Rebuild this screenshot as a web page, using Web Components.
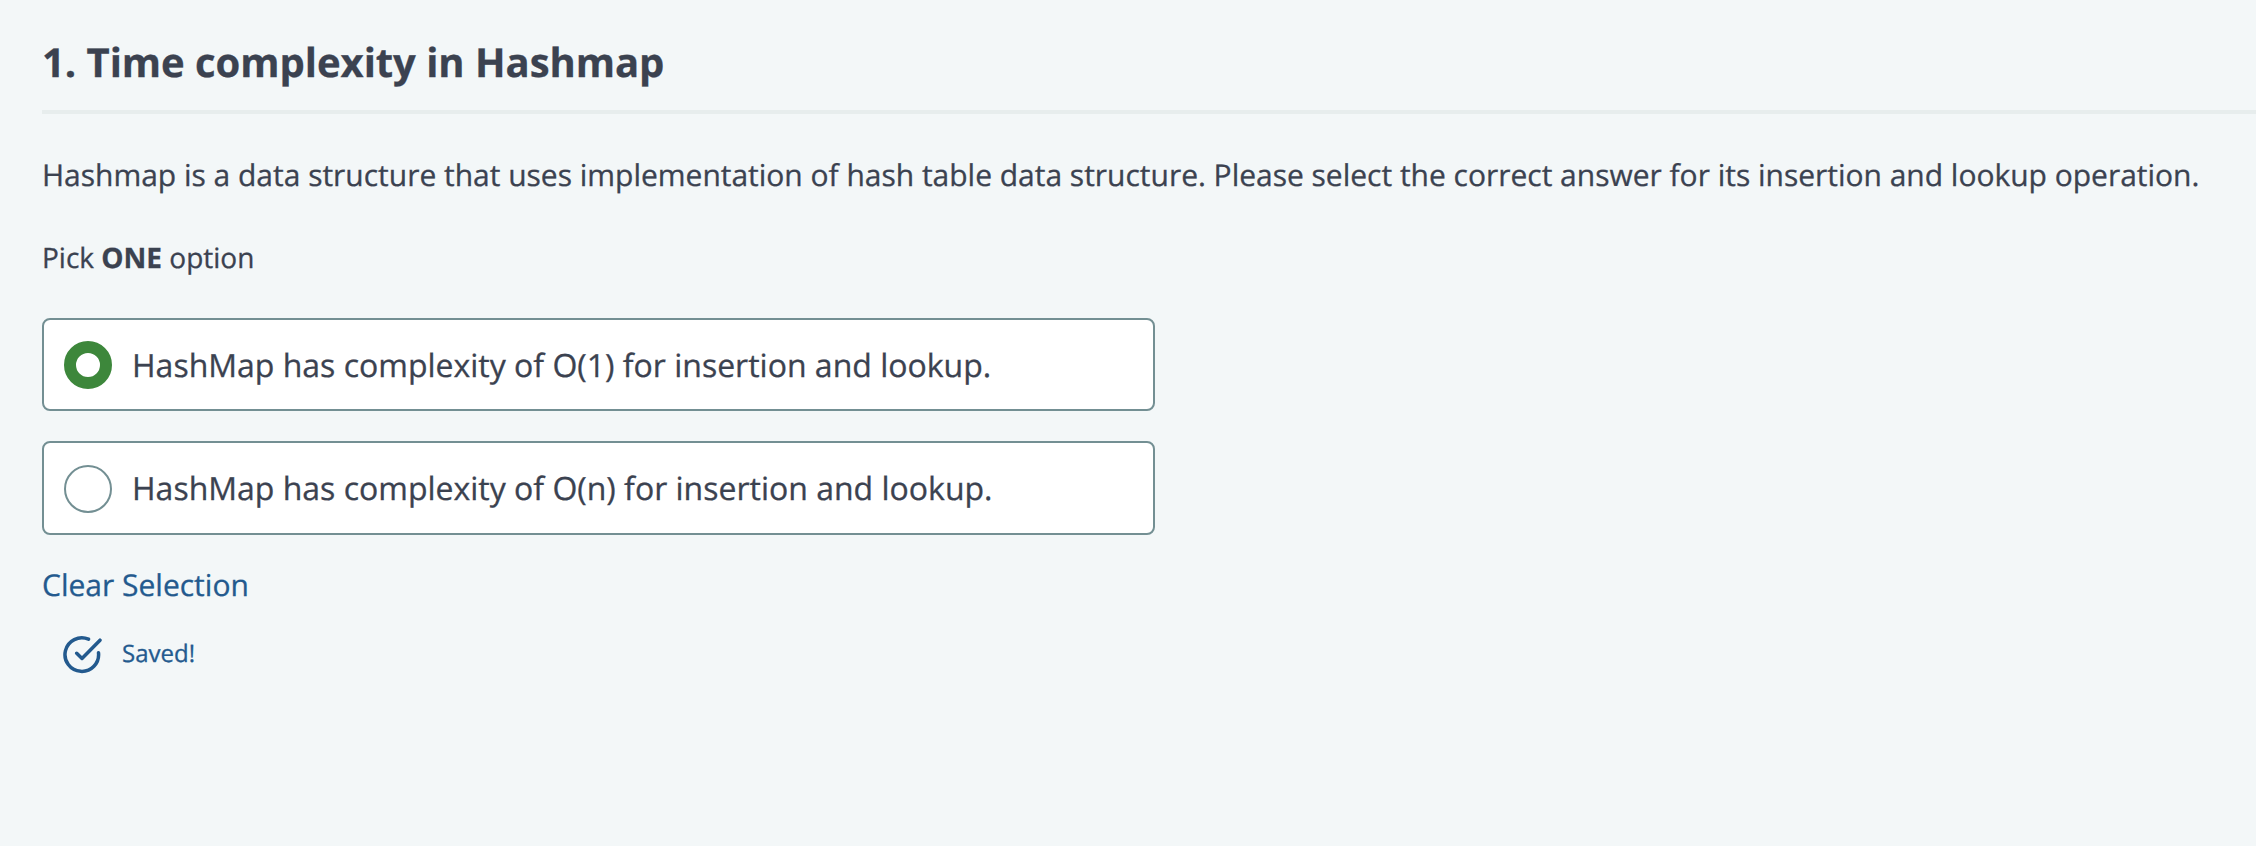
<!DOCTYPE html>
<html lang="en">
<head>
<meta charset="utf-8">
<title>Time complexity in Hashmap</title>
<style>
html, body { margin: 0; background: #f3f7f8; }
body { min-height: 846px; overflow: hidden; color: #3b4250; font-family: "Open Sans", "Noto Sans", sans-serif; text-rendering: geometricPrecision; -webkit-text-stroke: 0.3px currentColor; }
</style>
</head>
<body>
<quiz-question>
  <span slot="title">1. Time complexity in Hashmap</span>
  <span slot="prompt">Hashmap is a data structure that uses implementation of hash table data structure. Please select the correct answer for its insertion and lookup operation.</span>
  <span slot="hint">Pick <b>ONE</b> option</span>
  <quiz-option checked>HashMap has complexity of O(1) for insertion and lookup.</quiz-option>
  <quiz-option style="--option-height: 94px">HashMap has complexity of O(n) for insertion and lookup.</quiz-option>
  <span slot="clear">Clear Selection</span>
  <save-status slot="status">Saved!</save-status>
</quiz-question>
<script>
class QuizQuestion extends HTMLElement {
  constructor() {
    super();
    this.attachShadow({ mode: "open" }).innerHTML = `
      <style>
        :host { display: flex; flex-direction: column; padding: 35px 0 0 42px; white-space: nowrap; }
        h1 { margin: 0; padding-bottom: 21px; border-bottom: 4px solid #e7eded; font-size: 40px; line-height: 54px; font-weight: 700; letter-spacing: -0.04px; }
        p { margin: 40px 0 0; font-size: 30px; line-height: 42px; letter-spacing: -0.014px; }
        .hint { margin-top: 42px; font-size: 28px; line-height: 40px; }
        .options { display: flex; flex-direction: column; gap: 30px; margin-top: 40px; width: 1113px; }
        a { align-self: flex-start; margin-top: 29px; color: #235a8e; font-size: 30px; line-height: 42px; }
        .status { margin-top: 30px; }
      </style>
      <h1><slot name="title"></slot></h1>
      <p><slot name="prompt"></slot></p>
      <div class="hint"><slot name="hint"></slot></div>
      <div class="options" role="radiogroup"><slot></slot></div>
      <a role="button"><slot name="clear"></slot></a>
      <div class="status"><slot name="status"></slot></div>`;
  }
}
class QuizOption extends HTMLElement {
  constructor() {
    super();
    this.attachShadow({ mode: "open" }).innerHTML = `
      <style>
        :host { display: flex; align-items: flex-start; box-sizing: border-box; height: var(--option-height, 93px);
          padding: 21px 20px 0; border: 2px solid #738f93; border-radius: 8px; background: #fff; font-size: 32px; line-height: 48px; }
        :host(:not([checked])) { padding-top: 22px; }
        i { box-sizing: border-box; width: 48px; height: 48px; margin-right: 20px; border: 2px solid #738f93; border-radius: 50%; }
        :host([checked]) i { border: 12px solid #3d873b; }
        :host([checked]) span { line-height: 50px; }
      </style>
      <i></i><span><slot></slot></span>`;
  }
}
class SaveStatus extends HTMLElement {
  constructor() {
    super();
    this.attachShadow({ mode: "open" }).innerHTML = `
      <style>
        :host { display: flex; align-items: center; height: 34px; padding-left: 20px; color: #235a8e; font-size: 24px; line-height: 34px; }
        svg { flex: none; width: 40px; height: 40px; margin: 4px 20px 0 0; }
        span { padding-top: 2px; }
      </style>
      <svg viewBox="0 0 40 40" fill="none" stroke="currentColor" stroke-width="3.5" stroke-linecap="round" stroke-linejoin="round">
        <path d="M26.5 4.2A16.8 16.8 0 1 0 36.5 17.8M14.7 18.3L20 23.5L38 5.2"/>
      </svg>
      <span><slot></slot></span>`;
  }
}
customElements.define("quiz-question", QuizQuestion);
customElements.define("quiz-option", QuizOption);
customElements.define("save-status", SaveStatus);
</script>
</body>
</html>
